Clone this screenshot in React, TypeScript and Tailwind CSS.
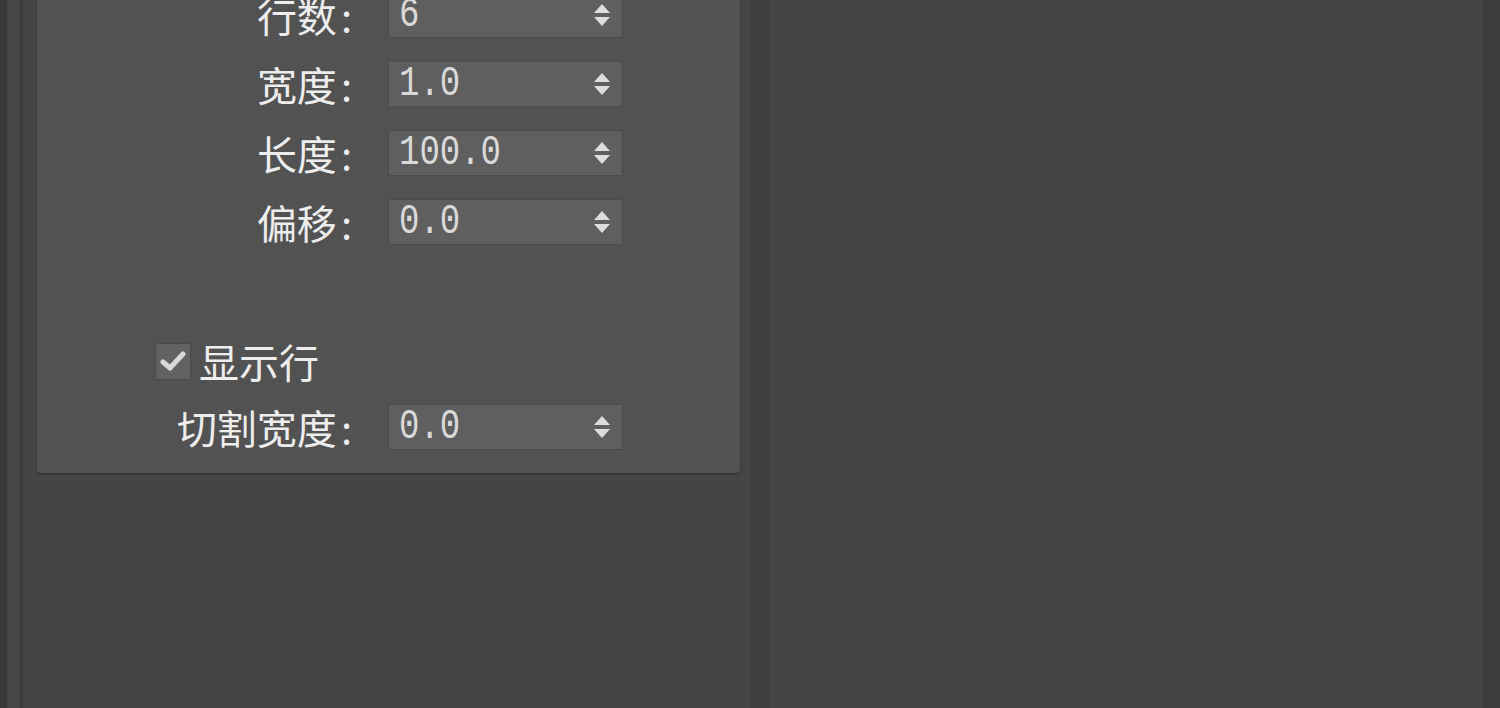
import React from 'react';

// Spinner field rows of the parameters rollout
const ROWS = [
  { label: '行数', value: '6' },
  { label: '宽度', value: '1.0' },
  { label: '长度', value: '100.0' },
  { label: '偏移', value: '0.0' },
];

const CJK = { fontFamily: '"Noto Sans CJK SC", "Noto Sans", sans-serif' };
const MONO = { fontFamily: '"Liberation Mono", "DejaVu Sans Mono", monospace' };

function Spinner({ value }: { value: string }) {
  return (
    <div className="flex h-[46px] w-[235px] items-center justify-between border border-[#4b4b4b] bg-[#5f5f5f] pl-[10px] pr-[11px]">
      <span style={MONO} className="inline-block origin-center scale-y-125 text-[34px] leading-none text-[#d9d9d9]">
        {value}
      </span>
      <svg width="18" height="24" viewBox="0 0 18 24" className="text-[#dddddd]">
        <path d="M9 1 L17 10 L1 10 Z" fill="currentColor" />
        <path d="M1 14 L17 14 L9 23 Z" fill="currentColor" />
      </svg>
    </div>
  );
}

function LabelRow({ label, value }: { label: string; value: string }) {
  return (
    <div className="flex items-center">
      <div style={CJK} className="w-[315px] text-right text-[40px] leading-none text-[#ededed]">
        {label}
        <span className="ml-[4px]">:</span>
      </div>
      <div className="ml-[36px]">
        <Spinner value={value} />
      </div>
    </div>
  );
}

export default function App() {
  return (
    <div className="flex h-[708px] w-[1500px] overflow-hidden bg-[#454545]">
      {/* left edge strips */}
      <div className="w-[7px] bg-[#393939]" />
      <div className="w-[13px] bg-[#474747]" />
      <div className="w-[3px] bg-[#3c3c3c]" />

      {/* command panel column */}
      <div className="w-[727px] pl-[14px] pr-[10px]">
        <div className="-mt-[20px] w-[703px] rounded-[4px] bg-[#525252] pt-[12px] pb-[23px] shadow-[0_1px_2px_rgba(0,0,0,0.35)]">
          <div className="flex flex-col gap-[23px]">
            {ROWS.map(r => (
              <LabelRow key={r.label} label={r.label} value={r.value} />
            ))}
          </div>

          <div className="mt-[93px] flex h-[46px] items-center pl-[118px]">
            <div className="flex h-[37px] w-[36px] items-center justify-center border border-[#4a4a4a] bg-[#626262]">
              <svg width="26" height="22" viewBox="0 0 26 22">
                <path d="M3 12 L10 18 L23 4" fill="none" stroke="#d8d8d8" strokeWidth="5" strokeLinecap="round" strokeLinejoin="round" />
              </svg>
            </div>
            <span style={CJK} className="ml-[8px] text-[40px] leading-none text-[#ededed]">显示行</span>
          </div>

          <div className="mt-[20px]">
            <LabelRow label="切割宽度" value="0.0" />
          </div>
        </div>
      </div>

      {/* splitter */}
      <div className="w-[20px] bg-[#3e3e3e]" />

      {/* viewport area */}
      <div className="flex-1 bg-[#454545]" />
      <div className="w-[17px] bg-[#3c3c3c]" />
    </div>
  );
}
